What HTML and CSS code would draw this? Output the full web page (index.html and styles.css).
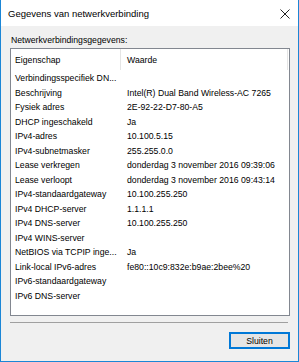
FILE: index.html
```html
<!DOCTYPE html>
<html lang="nl">
<head>
  <meta charset="UTF-8">
  <title>Gegevens van netwerkverbinding</title>
  <link rel="stylesheet" href="styles.css">
</head>
<body>

<div class="window">
  <div class="titlebar">
    <span class="title">Gegevens van netwerkverbinding</span>
    <svg class="close" width="10" height="10" viewBox="0 0 10 10">
      <path d="M0.5 0.5 L9.5 9.5 M9.5 0.5 L0.5 9.5" stroke="#222" stroke-width="1" fill="none"/>
    </svg>
  </div>

  <div class="dialog">
    <div class="label">Netwerkverbindingsgegevens:</div>

    <div class="listview">
      <div class="header">
        <div class="col-head first">Eigenschap</div>
        <div class="col-head">Waarde</div>
      </div>
      <div class="rows">
        <div class="row"><span class="key">Verbindingsspecifiek DN...</span><span class="val"></span></div>
        <div class="row"><span class="key">Beschrijving</span><span class="val">Intel(R) Dual Band Wireless-AC 7265</span></div>
        <div class="row"><span class="key">Fysiek adres</span><span class="val">2E-92-22-D7-80-A5</span></div>
        <div class="row"><span class="key">DHCP ingeschakeld</span><span class="val">Ja</span></div>
        <div class="row"><span class="key">IPv4-adres</span><span class="val">10.100.5.15</span></div>
        <div class="row"><span class="key">IPv4-subnetmasker</span><span class="val">255.255.0.0</span></div>
        <div class="row"><span class="key">Lease verkregen</span><span class="val">donderdag 3 november 2016 09:39:06</span></div>
        <div class="row"><span class="key">Lease verloopt</span><span class="val">donderdag 3 november 2016 09:43:14</span></div>
        <div class="row"><span class="key">IPv4-standaardgateway</span><span class="val">10.100.255.250</span></div>
        <div class="row"><span class="key">IPv4 DHCP-server</span><span class="val">1.1.1.1</span></div>
        <div class="row"><span class="key">IPv4 DNS-server</span><span class="val">10.100.255.250</span></div>
        <div class="row"><span class="key">IPv4 WINS-server</span><span class="val"></span></div>
        <div class="row"><span class="key">NetBIOS via TCPIP inge...</span><span class="val">Ja</span></div>
        <div class="row"><span class="key">Link-local IPv6-adres</span><span class="val">fe80::10c9:832e:b9ae:2bee%20</span></div>
        <div class="row"><span class="key">IPv6-standaardgateway</span><span class="val"></span></div>
        <div class="row"><span class="key">IPv6 DNS-server</span><span class="val"></span></div>
      </div>
    </div>

    <div class="separator"></div>

    <div class="buttons">
      <button class="btn">Sluiten</button>
    </div>
  </div>
</div>

</body>
</html>
```

FILE: styles.css
```css
* { box-sizing: border-box; }
body {
  margin: 0;
  font-family: 'Liberation Sans', Arial, sans-serif;
  font-size: 8.7px;
  color: #000;
  background: #fff;
}
.window {
  width: 299px;
  height: 362px;
  border: 1px solid #1b86d6;
  border-top: none;
  display: flex;
  flex-direction: column;
  background: #f0f0f0;
}
.titlebar {
  flex: none;
  height: 26px;
  background: #fff;
  display: flex;
  align-items: center;
  justify-content: space-between;
  padding: 0 7px 0 7px;
}
.title {
  font-size: 9.5px;
  padding-top: 1px;
}
.close {
  margin-right: 1px;
  margin-top: 1px;
}
.dialog {
  flex: 1;
  display: flex;
  flex-direction: column;
  padding: 7px 8px 0 9px;
}
.label {
  flex: none;
  height: 15px;
  line-height: 15px;
  padding-left: 1px;
}
.listview {
  flex: none;
  height: 268px;
  background: #fff;
  border: 1px solid #828790;
  display: flex;
  flex-direction: column;
}
.header {
  display: flex;
  height: 21px;
  align-items: center;
}
.col-head {
  height: 100%;
  display: flex;
  align-items: center;
  padding-left: 6px;
  flex: 1;
  border-right: 1px solid #e5e5e5;
  margin-right: 1px;
}
.col-head.first {
  flex: none;
  width: 110px;
  padding-left: 4px;
  margin-right: 0;
}
.rows {
  padding-top: 1px;
}
.row {
  display: flex;
  height: 14.5px;
  line-height: 14.5px;
  white-space: nowrap;
}
.key {
  width: 116px;
  padding-left: 4px;
}
.val {
  flex: 1;
}
.separator {
  flex: none;
  margin-top: 6px;
  height: 1px;
  width: 278px;
  background: #a0a0a0;
}
.buttons {
  display: flex;
  justify-content: flex-end;
  margin-top: 9px;
}
.btn {
  width: 61px;
  height: 17px;
  padding: 0;
  font-family: inherit;
  font-size: 8.7px;
  background: #e5e5e5;
  border: 2px solid #0078d7;
  border-radius: 0;
  color: #000;
}
```
